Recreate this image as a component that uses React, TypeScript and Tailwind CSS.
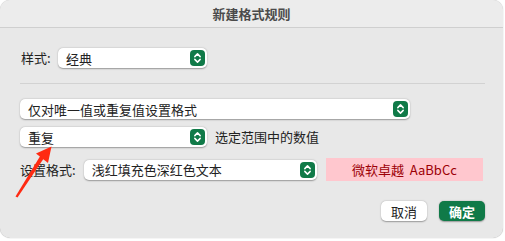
import React from "react"

const font = { fontFamily: '"Noto Sans CJK SC", "Noto Sans", sans-serif' }

function Stepper() {
  return (
    <div className="w-[15px] h-[16px] rounded-[4px] bg-[#107a48] flex items-center justify-center">
      <svg width="9" height="12" viewBox="0 0 9 12" fill="none" stroke="white" strokeWidth="1.5" strokeLinecap="round" strokeLinejoin="round">
        <path d="M1.8 4.6 L4.5 1.9 L7.2 4.6" />
        <path d="M1.8 7.4 L4.5 10.1 L7.2 7.4" />
      </svg>
    </div>
  )
}

function Select({ text, className }: { text: string; className: string }) {
  return (
    <div
      className={`h-[20px] bg-white rounded-[5px] shadow-[0_0.5px_1.5px_rgba(0,0,0,0.35)] flex items-center justify-between pl-[8px] pr-[2px] ${className}`}
    >
      <span className="text-[13px] leading-none text-[#222]">{text}</span>
      <Stepper />
    </div>
  )
}

export default function App() {
  return (
    <div className="w-[505px] h-[241px] bg-white relative" style={font}>
      <div className="w-[503px] h-[238px] rounded-[10px] bg-[#e8e8e8] shadow-[0_0_1px_rgba(0,0,0,0.4)] overflow-hidden flex flex-col">
        {/* Title bar */}
        <div className="h-[28px] bg-[#ececec] border-b border-[#cfcfcf] flex items-center justify-center">
          <span className="text-[13px] font-semibold text-[#4b4b4b]">新建格式规则</span>
        </div>

        <div className="px-[20px] flex flex-col">
          {/* 样式 */}
          <div className="mt-[20px] flex items-center">
            <span className="ml-[1px] text-[13px] text-[#222] w-[37px]">样式:</span>
            <Select text="经典" className="w-[149px]" />
          </div>

          <div className="mt-[15px] h-px bg-[#d2d2d2] w-[465px]" />

          {/* 规则类型 */}
          <div className="mt-[15px] flex">
            <Select text="仅对唯一值或重复值设置格式" className="w-[390px]" />
          </div>

          <div className="mt-[8px] flex items-center">
            <Select text="重复" className="w-[187px]" />
            <span className="ml-[8px] text-[13px] text-[#222]">选定范围中的数值</span>
          </div>

          {/* 设置格式 */}
          <div className="mt-[11px] flex items-center">
            <span className="text-[13px] text-[#222] w-[64px]">设置格式:</span>
            <Select text="浅红填充色深红色文本" className="w-[234px]" />
            <div className="ml-[9px] w-[158px] h-[23px] bg-[#ffc7ce] flex items-center justify-center">
              <span className="text-[13px] text-[#9c0006]">微软卓越&nbsp;&nbsp;AaBbCc</span>
            </div>
          </div>

          {/* Buttons */}
          <div className="mt-[20px] flex justify-end gap-[12px] w-[465px]">
            <button className="w-[46px] h-[20px] bg-white rounded-[5px] shadow-[0_0.5px_1.5px_rgba(0,0,0,0.35)] text-[13px] text-[#222] leading-none">
              取消
            </button>
            <button className="w-[46px] h-[20px] bg-[#107a48] rounded-[5px] shadow-[0_0.5px_1.5px_rgba(0,0,0,0.35)] text-[13px] text-white font-semibold leading-none">
              确定
            </button>
          </div>
        </div>
      </div>

      {/* Annotation arrow */}
      <svg className="absolute left-0 top-0 pointer-events-none" width="505" height="241" viewBox="0 0 505 241">
        <path d="M15.5 196.5 L17.5 197.5 L44 158 L40.5 155.5 Z" fill="#ff2a12" />
        <path d="M36 153.5 L51.5 146.5 L48 163 Z" fill="#ff2a12" />
      </svg>
    </div>
  )
}
